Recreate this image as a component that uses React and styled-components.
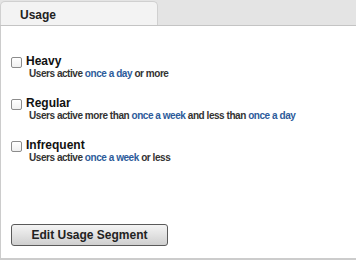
import React from "react";
import styled, { createGlobalStyle } from "styled-components";

const Global = createGlobalStyle`
  html, body { margin: 0; padding: 0; background: #ffffff; }
  body { font-family: "Liberation Sans", Arial, Helvetica, sans-serif; color: #222; }
`;

const Panel = styled.div`
  width: 356px;
  height: 262px;
  display: flex;
  flex-direction: column;
  background: #fff;
`;

const TabBar = styled.div`
  height: 25px;
  background: #e4e4e4;
  border-bottom: 1px solid #c4c4c4;
  display: flex;
  align-items: flex-end;
`;

const Tab = styled.div`
  width: 158px;
  height: 24px;
  box-sizing: border-box;
  background: #f3f3f3;
  border: 1px solid #d0d0d0;
  border-bottom: none;
  border-radius: 5px 5px 0 0;
  font-size: 12px;
  font-weight: bold;
  color: #222;
  padding: 6px 0 0 19px;
`;

const Body = styled.div`
  height: 234px;
  box-sizing: border-box;
  border-left: 1px solid #cccccc;
  border-bottom: 2px solid #cccccc;
  display: flex;
  flex-direction: column;
  padding: 29px 0 12px 10px;
`;

const List = styled.div`
  display: flex;
  flex-direction: column;
  gap: 17px;
`;

const Item = styled.label`
  display: flex;
  gap: 4px;
  align-items: flex-start;
`;

const Box = styled.span`
  width: 11px;
  height: 11px;
  box-sizing: border-box;
  margin-top: 2px;
  border: 1px solid #8c8c8c;
  border-radius: 2px;
  background: linear-gradient(#ffffff, #f0f0f0);
  flex: none;
`;

const Texts = styled.div`
  display: flex;
  flex-direction: column;
`;

const Title = styled.div`
  font-size: 12px;
  font-weight: bold;
  line-height: 13px;
  color: #111;
`;

const Sub = styled.div`
  font-size: 10px;
  font-weight: bold;
  letter-spacing: -0.45px;
  line-height: 12px;
  color: #333;
  padding-left: 3px;
`;

const Em = styled.span`
  color: #2d5b9a;
`;

const Button = styled.button`
  margin-top: auto;
  width: 157px;
  height: 22px;
  border: 1px solid #5a5a5a;
  border-radius: 3px;
  background: linear-gradient(#f4f4f4 0%, #e2e2e2 50%, #cfcfcf 100%);
  font-family: "Liberation Sans", Arial, sans-serif;
  font-size: 12px;
  font-weight: bold;
  color: #222;
  padding: 0;
  text-align: center;
`;

const items = [
  { title: "Heavy", sub: [["Users active "], ["once a day", true], [" or more"]] },
  {
    title: "Regular",
    sub: [["Users active more than "], ["once a week", true], [" and less than "], ["once a day", true]],
  },
  { title: "Infrequent", sub: [["Users active "], ["once a week", true], [" or less"]] },
];

export default function App() {
  return (
    <>
      <Global />
      <Panel>
        <TabBar>
          <Tab>Usage</Tab>
        </TabBar>
        <Body>
          <List>
            {items.map((it) => (
              <Item key={it.title}>
                <Box />
                <Texts>
                  <Title>{it.title}</Title>
                  <Sub>
                    {it.sub.map(([t, em], i) => (em ? <Em key={i}>{t}</Em> : <span key={i}>{t}</span>))}
                  </Sub>
                </Texts>
              </Item>
            ))}
          </List>
          <Button>Edit Usage Segment</Button>
        </Body>
      </Panel>
    </>
  );
}
